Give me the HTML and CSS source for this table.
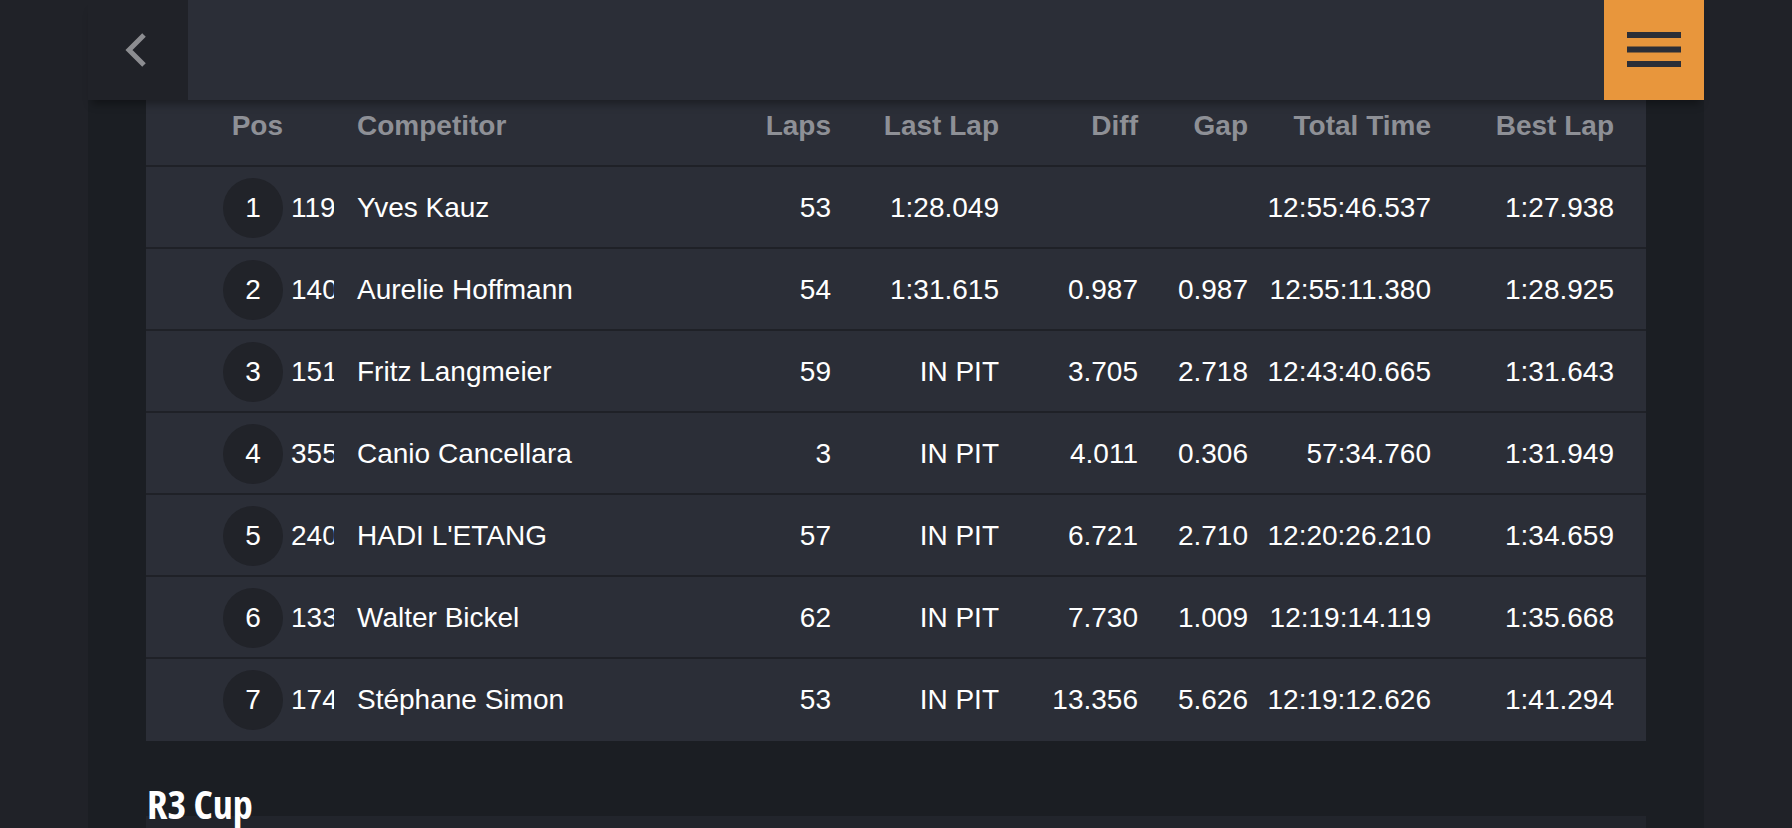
FILE: index.html
```html
<!DOCTYPE html>
<html lang="en">
<head>
<meta charset="utf-8">
<title>Results</title>
<link rel="stylesheet" href="styles.css">
</head>
<body>
<header class="topbar">
  <a class="back" href="#" aria-label="Back">
    <svg width="24" height="34" viewBox="0 0 24 34"><path d="M20 2 L5 17 L20 32" fill="none" stroke="#8c8d91" stroke-width="5"/></svg>
  </a>
  <div class="bar"></div>
  <button class="menu" aria-label="Menu">
    <svg width="54" height="36" viewBox="0 0 54 36"><rect x="0" y="0" width="54" height="6" fill="#2b2e37"/><rect x="0" y="14.5" width="54" height="6" fill="#2b2e37"/><rect x="0" y="29" width="54" height="6" fill="#2b2e37"/></svg>
  </button>
</header>
<main class="page">
  <section class="results">
    <div class="row head">
      <div class="c-pos">Pos</div>
      <div class="c-num"></div>
      <div class="c-name">Competitor</div>
      <div class="c-r">Laps</div>
      <div class="c-r">Last Lap</div>
      <div class="c-r">Diff</div>
      <div class="c-r">Gap</div>
      <div class="c-r">Total Time</div>
      <div class="c-r">Best Lap</div>
    </div>
    <div class="row">
      <div class="c-pos"><span class="badge">1</span></div>
      <div class="c-num"><span>119</span></div>
      <div class="c-name">Yves Kauz</div>
      <div class="c-r">53</div>
      <div class="c-r">1:28.049</div>
      <div class="c-r"></div>
      <div class="c-r"></div>
      <div class="c-r">12:55:46.537</div>
      <div class="c-r">1:27.938</div>
    </div>
    <div class="row">
      <div class="c-pos"><span class="badge">2</span></div>
      <div class="c-num"><span>140</span></div>
      <div class="c-name">Aurelie Hoffmann</div>
      <div class="c-r">54</div>
      <div class="c-r">1:31.615</div>
      <div class="c-r">0.987</div>
      <div class="c-r">0.987</div>
      <div class="c-r">12:55:11.380</div>
      <div class="c-r">1:28.925</div>
    </div>
    <div class="row">
      <div class="c-pos"><span class="badge">3</span></div>
      <div class="c-num"><span>151</span></div>
      <div class="c-name">Fritz Langmeier</div>
      <div class="c-r">59</div>
      <div class="c-r">IN PIT</div>
      <div class="c-r">3.705</div>
      <div class="c-r">2.718</div>
      <div class="c-r">12:43:40.665</div>
      <div class="c-r">1:31.643</div>
    </div>
    <div class="row">
      <div class="c-pos"><span class="badge">4</span></div>
      <div class="c-num"><span>355</span></div>
      <div class="c-name">Canio Cancellara</div>
      <div class="c-r">3</div>
      <div class="c-r">IN PIT</div>
      <div class="c-r">4.011</div>
      <div class="c-r">0.306</div>
      <div class="c-r">57:34.760</div>
      <div class="c-r">1:31.949</div>
    </div>
    <div class="row">
      <div class="c-pos"><span class="badge">5</span></div>
      <div class="c-num"><span>240</span></div>
      <div class="c-name">HADI L'ETANG</div>
      <div class="c-r">57</div>
      <div class="c-r">IN PIT</div>
      <div class="c-r">6.721</div>
      <div class="c-r">2.710</div>
      <div class="c-r">12:20:26.210</div>
      <div class="c-r">1:34.659</div>
    </div>
    <div class="row">
      <div class="c-pos"><span class="badge">6</span></div>
      <div class="c-num"><span>133</span></div>
      <div class="c-name">Walter Bickel</div>
      <div class="c-r">62</div>
      <div class="c-r">IN PIT</div>
      <div class="c-r">7.730</div>
      <div class="c-r">1.009</div>
      <div class="c-r">12:19:14.119</div>
      <div class="c-r">1:35.668</div>
    </div>
    <div class="row last">
      <div class="c-pos"><span class="badge">7</span></div>
      <div class="c-num"><span>174</span></div>
      <div class="c-name">Stéphane Simon</div>
      <div class="c-r">53</div>
      <div class="c-r">IN PIT</div>
      <div class="c-r">13.356</div>
      <div class="c-r">5.626</div>
      <div class="c-r">12:19:12.626</div>
      <div class="c-r">1:41.294</div>
    </div>
  </section>
  <h2 class="class-title">R3 Cup</h2>
  <section class="results next"></section>
</main>
</body>
</html>
```

FILE: styles.css
```css
html, body {
  margin: 0;
  padding: 0;
}
body {
  background: #202228;
  font-family: "Liberation Sans", Arial, sans-serif;
  color: #ffffff;
  overflow: hidden;
}
.topbar {
  position: fixed;
  top: 0;
  left: 88px;
  width: 1616px;
  height: 100px;
  display: flex;
  z-index: 10;
  box-shadow: 0 8px 8px -4px rgba(0, 0, 0, 0.35);
}
.back {
  width: 100px;
  background: #202228;
  display: flex;
  align-items: center;
  justify-content: center;
}
.back svg {
  display: block;
  margin-left: -4px;
}
.bar {
  flex: 1;
  background: #2b2e37;
}
.menu {
  width: 100px;
  border: 0;
  padding: 0;
  margin: 0;
  background: #e8963c;
  display: flex;
  align-items: center;
  justify-content: center;
}
.menu svg {
  display: block;
  margin-top: -1px;
}
.page {
  margin-left: 88px;
  width: 1616px;
  min-height: 100vh;
  box-sizing: border-box;
  padding: 85px 58px 0 58px;
  background: #1b1e23;
}
.results {
  background: #2b2e37;
}
.row {
  display: grid;
  grid-template-columns: 137px 74px 374px 100px 168px 139px 110px 183px 183px;
  box-sizing: border-box;
  padding: 2px 32px 0 0;
  height: 82px;
  align-items: center;
  border-bottom: 2px solid #1f2127;
  font-size: 28px;
  line-height: 32px;
}
.row.last {
  border-bottom-color: #2b2e37;
}
.row.head {
  color: #8e9096;
  font-weight: 700;
}
.c-pos {
  display: flex;
  justify-content: flex-end;
}
.badge {
  width: 60px;
  height: 60px;
  border-radius: 50%;
  background: #212329;
  display: flex;
  align-items: center;
  justify-content: center;
}
.c-num {
  padding-left: 8px;
}
.c-num span {
  display: block;
  width: 43px;
  overflow: hidden;
  white-space: nowrap;
}
.c-name {
  white-space: nowrap;
}
.c-r {
  text-align: right;
  white-space: nowrap;
}
.class-title {
  margin: 50px 0 0 1px;
  font-family: "Open Sans", "Liberation Sans Narrow", sans-serif;
  font-stretch: 75%;
  font-weight: 700;
  font-size: 40px;
  line-height: 26px;
  height: 25px;
  color: #ffffff;
  position: relative;
  z-index: 1;
}
.results.next {
  background: #22252c;
  height: 60px;
}
```
